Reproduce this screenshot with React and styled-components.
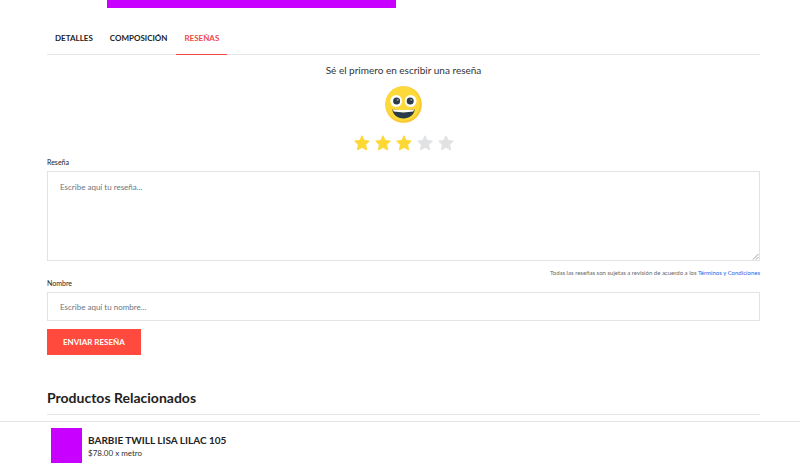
import React, { useState } from "react";
import styled, { createGlobalStyle } from "styled-components";

const GlobalStyle = createGlobalStyle`
  *, *::before, *::after { box-sizing: border-box; }
  body {
    margin: 0;
    background: #fff;
    color: #222;
    font-family: Lato, "Open Sans", sans-serif;
    font-size: 8px;
    overflow: hidden;
  }
  button, input, textarea { font-family: inherit; }
`;

const Page = styled.main`
  padding: 0 40px 56px 47px;
`;

const Gallery = styled.div`
  width: calc(41% - 3px);
  height: 8px;
  margin-left: 60px;
  background: #c800ff;
`;

const Tabs = styled.div`
  display: flex;
  gap: 1px;
  margin-top: 14px;
  border-bottom: 1px solid #e6e6e6;
`;

const Tab = styled.button`
  height: 33px;
  margin-bottom: -1px;
  padding: 0 8px;
  border: 0;
  border-bottom: 1px solid ${(p) => (p.$active ? "#ee4b42" : "transparent")};
  background: none;
  color: ${(p) => (p.$active ? "#ee4b42" : "#222")};
  font-size: 8px;
  font-weight: 700;
  cursor: pointer;
`;

const Rating = styled.section`
  display: flex;
  flex-direction: column;
  align-items: center;
`;

const Invitation = styled.p`
  margin: 9px 0 10px;
  color: #333;
  font-size: 10px;
  line-height: 12px;
`;

const Stars = styled.div`
  display: flex;
  gap: 3px;
  margin-top: 11px;
`;

const StarButton = styled.button`
  display: block;
  width: 18px;
  height: 18px;
  padding: 0;
  border: 0;
  background: none;
  color: ${(p) => (p.$on ? "#fdd835" : "#e1e2e3")};
  cursor: pointer;

  svg { display: block; }
`;

const Form = styled.form`
  display: flex;
  flex-direction: column;
  align-items: stretch;
`;

const Label = styled.label`
  margin-top: 6px;
  color: #222;
  font-size: 7px;
  line-height: 9px;
`;

const fieldStyles = `
  display: block;
  width: 100%;
  margin: 4px 0 0;
  border: 1px solid #e3e3e3;
  border-radius: 0;
  background: #fff;
  color: #333;
  font-size: 8px;
  line-height: 12px;
  outline: 0;
  &::placeholder { color: #6c757d; opacity: 1; }
`;

const TextArea = styled.textarea`
  ${fieldStyles}
  height: 90px;
  padding: 9px 12px;
  resize: none;
`;

const TextInput = styled.input`
  ${fieldStyles}
  height: 29px;
  padding: 0 12px;
`;

const AreaWrap = styled.div`
  position: relative;
`;

const Grip = styled.svg`
  position: absolute;
  right: 1px;
  bottom: 1px;
`;

const Notice = styled.p`
  margin: 8px 0 -4px;
  color: #666;
  font-size: 6px;
  line-height: 8px;
  text-align: right;
`;

const Link = styled.a`
  color: #2563eb;
  text-decoration: none;
`;

const Submit = styled.button`
  align-self: flex-start;
  height: 26px;
  margin-top: 8px;
  padding: 0 16px;
  border: 0;
  background: #ff4a3d;
  color: #fff;
  font-size: 8px;
  font-weight: 700;
  cursor: pointer;
`;

const Heading = styled.h2`
  margin: 34px 0 0;
  padding-bottom: 8px;
  border-bottom: 1px solid #e6e6e6;
  color: #222;
  font-size: 14px;
  font-weight: 700;
  line-height: 17px;
`;

const ProductBar = styled.aside`
  position: fixed;
  inset: auto 0 0;
  display: flex;
  gap: 6px;
  padding: 6px 51px 0;
  border-top: 1px solid #e3e3e3;
  background: #fff;
`;

const Swatch = styled.div`
  width: 31px;
  height: 35px;
  background: #c800ff;
`;

const ProductName = styled.h3`
  margin: 6px 0 0;
  color: #222;
  font-size: 10px;
  font-weight: 700;
  line-height: 12px;
`;

const Price = styled.p`
  margin: 1px 0 0;
  color: #333;
  font-size: 8px;
  line-height: 12px;
`;

const Face = () => (
  <svg width="37" height="37" viewBox="0 0 37 37" role="img" aria-label="Cara sonriente">
    <circle cx="18.5" cy="18.5" r="18.3" fill="#fbc52d" />
    <circle cx="17.8" cy="17.8" r="17.2" fill="#fdd93a" />
    <circle cx="11.2" cy="15" r="5.9" fill="#fff" />
    <circle cx="25.6" cy="15" r="5.9" fill="#fff" />
    <circle cx="11.6" cy="15" r="3.5" fill="#2b3b47" />
    <circle cx="25.2" cy="15" r="3.5" fill="#2b3b47" />
    <ellipse cx="12.6" cy="13.9" rx="1" ry="0.8" fill="#9aa5ad" />
    <ellipse cx="26.2" cy="13.9" rx="1" ry="0.8" fill="#9aa5ad" />
    <path d="M7.3 23.6Q18.5 24.6 29.7 23.6C29 29.4 24.4 32.4 18.5 32.4S8 29.4 7.3 23.6Z" fill="#2b3b47" />
    <path d="M7.8 23.6Q18.5 24.6 29.2 23.6L28.3 25.6Q18.5 27.2 8.7 25.6Z" fill="#fff" />
  </svg>
);

const Star = () => (
  <svg width="18" height="18" viewBox="0 0 18 18" aria-hidden="true">
    <path
      d="M9 1.8L11.2 6.5L16.3 7.1L12.6 10.7L13.6 15.9L9 13.3L4.4 15.9L5.4 10.7L1.7 7.1L6.8 6.5Z"
      fill="currentColor"
      stroke="currentColor"
      strokeWidth="1"
      strokeLinejoin="round"
    />
  </svg>
);

const TABS = ["DETALLES", "COMPOSICIÓN", "RESEÑAS"];

export default function App() {
  const [tab, setTab] = useState("RESEÑAS");
  const [rating, setRating] = useState(3);

  return (
    <>
      <GlobalStyle />
      <Page>
        <Gallery />
        <Tabs role="tablist">
          {TABS.map((name) => (
            <Tab
              key={name}
              type="button"
              role="tab"
              aria-selected={tab === name}
              $active={tab === name}
              onClick={() => setTab(name)}
            >
              {name}
            </Tab>
          ))}
        </Tabs>
        <Rating>
          <Invitation>Sé el primero en escribir una reseña</Invitation>
          <Face />
          <Stars>
            {[1, 2, 3, 4, 5].map((n) => (
              <StarButton
                key={n}
                type="button"
                aria-label={`${n} de 5`}
                $on={n <= rating}
                onClick={() => setRating(n)}
              >
                <Star />
              </StarButton>
            ))}
          </Stars>
        </Rating>
        <Form onSubmit={(e) => e.preventDefault()}>
          <Label htmlFor="review">Reseña</Label>
          <AreaWrap>
            <TextArea id="review" placeholder="Escribe aquí tu reseña..." />
            <Grip width="7" height="7" viewBox="0 0 7 7" aria-hidden="true">
              <path d="M1 6.5L6.5 1M4 6.5L6.5 4" stroke="#888" strokeWidth="0.8" />
            </Grip>
          </AreaWrap>
          <Notice>
            Todas las reseñas son sujetas a revisión de acuerdo a los{" "}
            <Link href="#terminos">Términos y Condiciones</Link>
          </Notice>
          <Label htmlFor="name">Nombre</Label>
          <TextInput id="name" type="text" placeholder="Escribe aquí tu nombre..." />
          <Submit type="submit">ENVIAR RESEÑA</Submit>
        </Form>
        <Heading>Productos Relacionados</Heading>
      </Page>
      <ProductBar>
        <Swatch />
        <div>
          <ProductName>BARBIE TWILL LISA LILAC 105</ProductName>
          <Price>$78.00 x metro</Price>
        </div>
      </ProductBar>
    </>
  );
}
